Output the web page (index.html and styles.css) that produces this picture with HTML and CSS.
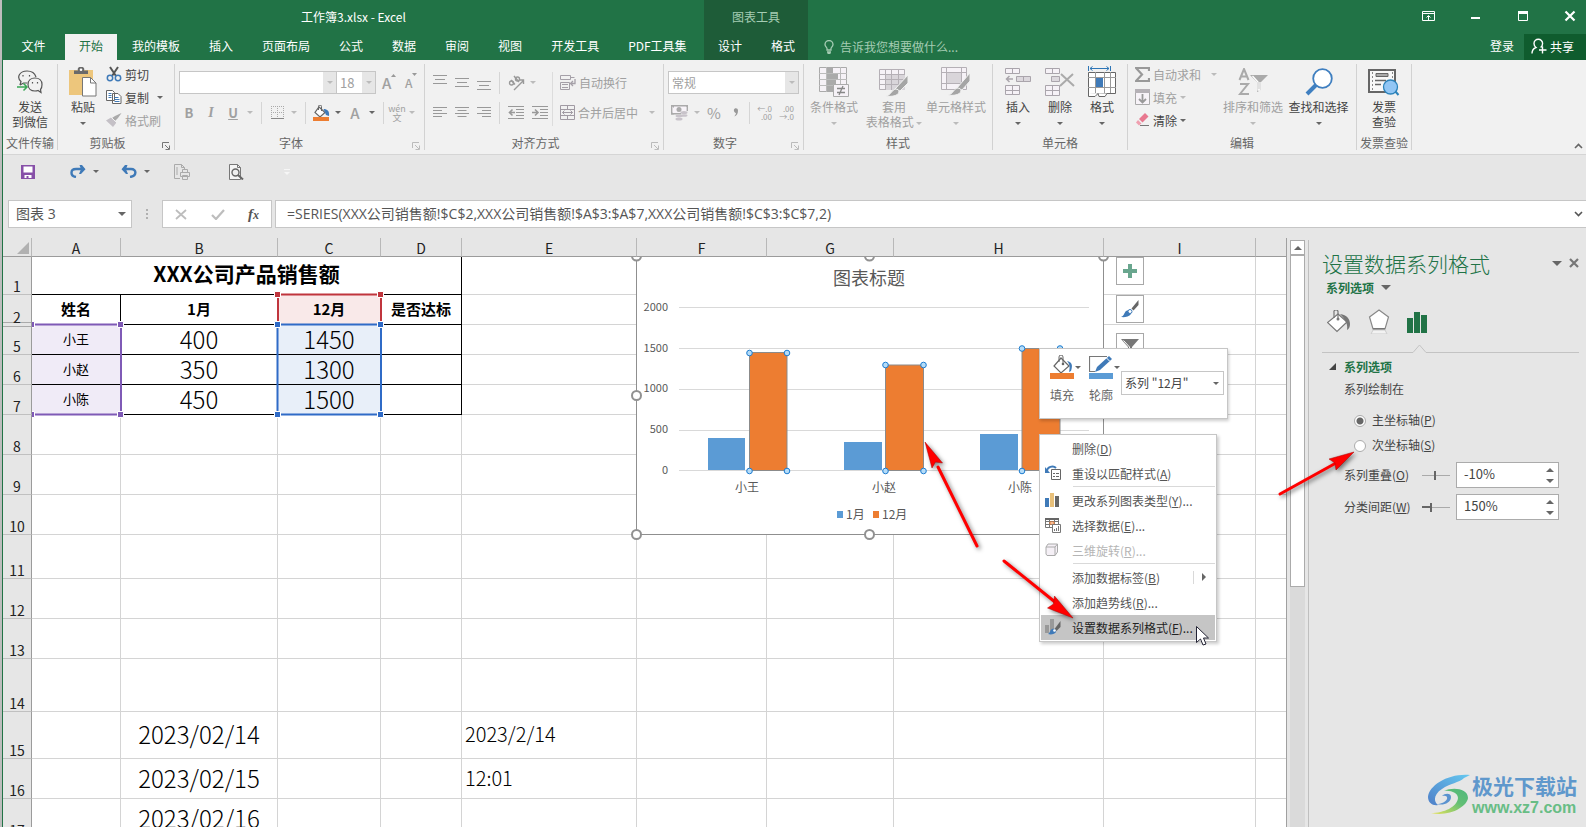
FILE: index.html
```html
<!DOCTYPE html>
<html lang="zh-CN">
<head>
<meta charset="utf-8">
<title>工作簿3.xlsx - Excel</title>
<link rel="stylesheet" href="styles.css">
</head>
<body>
<div class="app">
  <header class="titlebar">
    <div class="title-left">
      <h1 class="doc-title">工作簿3.xlsx - Excel</h1>
      <nav class="tabs">
        <button class="tab tab-file">文件</button>
        <button class="tab tab-active">开始</button>
        <button class="tab">我的模板</button>
        <button class="tab">插入</button>
        <button class="tab">页面布局</button>
        <button class="tab">公式</button>
        <button class="tab">数据</button>
        <button class="tab">审阅</button>
        <button class="tab">视图</button>
        <button class="tab">开发工具</button>
        <button class="tab">PDF工具集</button>
      </nav>
    </div>
    <div class="context-tabs">
      <span class="context-title">图表工具</span>
      <nav class="tabs">
        <button class="tab">设计</button>
        <button class="tab">格式</button>
      </nav>
    </div>
    <div class="title-right">
      <div class="window-controls">
        <button aria-label="功能区显示选项"><svg width="14" height="12" viewBox="0 0 14 12" fill="none" stroke="#fff"><path d="M.5 1.500h12v9H.5zM.5 3.500h12M6.500 10V6M4.500 7.500l2-2 2 2"/></svg></button>
        <button aria-label="最小化"><svg width="14" height="12" viewBox="0 0 14 12"><path d="M2 7h9v2H2z" fill="#fff"/></svg></button>
        <button aria-label="最大化"><svg width="14" height="12" viewBox="0 0 14 12"><path d="M2.500 1.500h9v9h-9z" fill="none" stroke="#fff"/><path d="M2 1h10v3H2z" fill="#fff"/></svg></button>
        <button aria-label="关闭"><svg width="14" height="12" viewBox="0 0 14 12"><path d="M2.500 1.500l9 9M11.500 1.500l-9 9" stroke="#fff" stroke-width="2.200"/></svg></button>
      </div>
      <div class="title-actions">
        <svg class="bulb" width="10" height="14" viewBox="0 0 10 14" fill="none" stroke="#a5ccb3" stroke-width="1.300"><path d="M3 10V8.500C3 7.500 1 6.500 1 4.500a4 4 0 0 1 8 0c0 2-2 3-2 4V10zM3 12h4M3.500 13.400h3"/></svg>
        <span class="tell-me">告诉我您想要做什么...</span>
        <button class="login">登录</button>
        <button class="share"><svg width="16" height="16" viewBox="0 0 16 16" fill="none" stroke="#fff" stroke-width="1.400"><path d="M1 15.500c0-3 1.500-5 4-6C3.500 8.500 3 7 3 5.500a4.300 4.300 0 0 1 8.600 0c0 1.500-.6 3-2 4M11.500 8.500v7M8 12h7.500"/></svg><span>共享</span></button>
      </div>
    </div>
  </header>

  <section class="ribbon">
    <div class="group g-send">
      <div class="group-body">
        <button class="big"><span class="big-icon"><svg width="26" height="24" viewBox="0 0 26 24" fill="none" stroke="#555" stroke-width="1.200"><path d="M3 15l1-3.500C-1 7 3 1 10 1c5 0 8 2.500 9 6"/><path d="M3 15l3.500-2H10"/><path d="M25 14.500c0-4-3-6.500-7-6.500s-7 2.500-7 6.500 3 6.500 7 6.500c1 0 2-.1 3-.5l3 2-.5-3c1-1 1.500-3 1.500-5z" fill="#f1f1f1"/><path d="M6 5v1.500M12.500 5v1.500M15.500 12v1.500M20.500 12v1.500"/><path d="M0 17h10M6.500 13.500L10 17l-3.500 3.500" stroke="#3aa655" stroke-width="1.500"/></svg></span><span>发送</span><span>到微信</span></button>
      </div>
      <div class="group-label">文件传输</div>
    </div>

    <div class="group g-clip">
      <div class="group-body">
        <button class="big paste"><span class="big-icon"><svg width="30" height="30" viewBox="0 0 30 30"><path d="M1 3h24v25H1z" fill="#edc67c"/><path d="M6 7V3.500h4A2.500 2.500 0 0 1 13 0a2.500 2.500 0 0 1 3 3.500h4V7z" fill="#6a6a6a"/><circle cx="13" cy="2.800" r="1.300" fill="#fff"/><path d="M14.500 10.500h8l5.500 5.500v13H14.500z" fill="#fff" stroke="#777"/><path d="M22.500 10.500V16H28" fill="none" stroke="#777"/></svg></span><span>粘贴</span><span><i class="caret"></i></span></button>
        <div class="stack">
          <button class="small"><svg width="16" height="16" viewBox="0 0 16 16" fill="none"><path d="M4 1l6 9M12 1L6 10" stroke="#555" stroke-width="2"/><circle cx="4" cy="12" r="2.700" stroke="#3f7ab8" stroke-width="1.500"/><circle cx="12" cy="12" r="2.700" stroke="#3f7ab8" stroke-width="1.500"/></svg><span>剪切</span></button>
          <button class="small"><svg width="16" height="14" viewBox="0 0 16 14" fill="#fff" stroke="#666"><path d="M.5.500h6l2 2v8h-8zM6.500 3.500h5.500l3 3v7H6.500z"/><path d="M2.500 3.500h3M2.500 5.500h3M2.500 7.500h3M8.500 7.500h4M8.500 9.500h5M8.500 11.500h5" stroke="#3f7ab8"/></svg><span>复制</span><i class="caret copy-caret"></i></button>
          <button class="small off"><svg width="16" height="14" viewBox="0 0 16 14"><path d="M15.500 0L12 5l-3 3-3-3 3-2z" fill="#aaa"/><path d="M5 4.500l5.500 5L7 14 0 7.500z" fill="#c4c0c6"/><path d="M5 4l6 6" stroke="#f1f1f1"/></svg><span>格式刷</span></button>
        </div>
      </div>
      <div class="group-label has-launcher">剪贴板<svg class="launcher" width="8" height="8" viewBox="0 0 8 8" fill="none" stroke="#777"><path d="M.5 6V.500H7M3 3l4 4M7.500 3.500v4h-4"/></svg></div>
    </div>

    <div class="group g-font off">
      <div class="group-body rows">
        <div class="row">
          <span class="combo font-name"><select aria-label="字体"><option></option></select><i class="drop"></i></span><span class="combo font-size"><select aria-label="字号"><option>18</option></select><i class="drop"></i></span>
          <button class="grow-font" aria-label="增大字号"><b class="ga">A</b><svg width="5" height="3" viewBox="0 0 5 3"><path d="M0 3L2.500 0 5 3z" fill="#999"/></svg></button>
          <button class="grow-font" aria-label="减小字号"><b class="gs">A</b><svg width="5" height="3" viewBox="0 0 5 3"><path d="M0 0h5L2.500 3z" fill="#999"/></svg></button>
        </div>
        <div class="row format-row">
          <button class="fmt"><b>B</b></button><button class="fmt"><em>I</em></button><button class="fmt"><u>U</u></button><i class="caret slot"></i><i class="sep"></i>
          <button class="fmt" aria-label="边框"><svg width="13" height="13" viewBox="0 0 13 13" fill="none" stroke="#aaa"><path d="M0 .5h13M0 6.500h13M.5 0v12M6.500 0v12M12.500 0v12" stroke-dasharray="1 1"/><path d="M0 12.500h13" stroke="#888"/></svg></button><i class="caret slot"></i><i class="sep"></i>
          <button class="fmt" aria-label="填充颜色"><svg width="17" height="16" viewBox="0 0 17 16"><path d="M6 2l6 5.500-5 4.500-5-4.500z" fill="#fff" stroke="#666" stroke-width="1.200"/><path d="M5.500 5V1.500a1.500 1.500 0 0 1 3 0V6" fill="none" stroke="#666"/><path d="M10.500 4c4 0 6 2 5.500 7l-3-1z" fill="#3f7ab8"/><path d="M0 12h16v4H0z" fill="#ed7d31"/></svg></button><i class="caret slot dark"></i>
          <button class="fmt letter"><span>A</span></button><i class="caret slot dark"></i><i class="sep"></i>
          <button class="fmt pinyin"><span>wén</span><span>文</span></button><i class="caret slot"></i>
        </div>
      </div>
      <div class="group-label has-launcher">字体<svg class="launcher" width="8" height="8" viewBox="0 0 8 8" fill="none" stroke="#bbb"><path d="M.5 6V.500H7M3 3l4 4M7.500 3.500v4h-4"/></svg></div>
    </div>

    <div class="group g-align off">
      <div class="group-body">
        <div class="align-left rows">
          <div class="row icons">
            <svg width="14" height="15" viewBox="0 0 14 15" stroke="#999"><path d="M0 .5h14M2 4.500h10M0 8.500h14"/></svg>
            <svg width="14" height="15" viewBox="0 0 14 15" stroke="#999"><path d="M0 3.500h14M2 7.500h10M0 11.500h14"/></svg>
            <svg width="14" height="15" viewBox="0 0 14 15" stroke="#999"><path d="M0 6.500h14M2 10.500h10M0 14.500h14"/></svg>
            <i class="bar"></i>
            <svg width="17" height="16" viewBox="0 0 17 16" fill="none" stroke="#999" stroke-width="1.400"><path d="M6 15L15.500 5.500M11.500 5h4v4"/><circle cx="3.500" cy="8" r="2"/><path d="M3 5l4 4.500M6 1l5 6"/><circle cx="9.500" cy="4" r="2"/></svg><i class="caret"></i>
          </div>
          <div class="row icons">
            <svg width="14" height="11" viewBox="0 0 14 11" stroke="#999"><path d="M0 .5h14M0 3.500h9M0 6.500h14M0 9.500h9"/></svg>
            <svg width="14" height="11" viewBox="0 0 14 11" stroke="#999"><path d="M0 .5h14M2.500 3.500h9M0 6.500h14M2.500 9.500h9"/></svg>
            <svg width="14" height="11" viewBox="0 0 14 11" stroke="#999"><path d="M0 .5h14M5 3.500h9M0 6.500h14M5 9.500h9"/></svg>
            <i class="bar"></i>
            <svg width="16" height="13" viewBox="0 0 16 13" stroke="#999"><path d="M0 .5h16M8 3.500h8M8 6.500h8M8 9.500h8M0 12.500h16"/><path d="M2 6.500h5M4.500 3.500l-3 3 3 3" fill="none" stroke-width="1.600"/></svg>
            <svg width="16" height="13" viewBox="0 0 16 13" stroke="#999"><path d="M0 .5h16M8 3.500h8M8 6.500h8M8 9.500h8M0 12.500h16"/><path d="M0 6.500h5M3 3.500l3 3-3 3" fill="none" stroke-width="1.600"/></svg>
          </div>
        </div>
        <div class="align-right rows">
          <button class="row wide"><svg width="16" height="16" viewBox="0 0 16 16" fill="none" stroke="#a5a0a8"><path d="M.5.500h10v4H.5zM.5 7.500h9v7h-9zM10.500 2.500h4M2 9.500h6M2 12.500h6"/><path d="M15 4v4.500h-4M13 6l-2.500 2.500L13 11" stroke-width="1.300"/></svg><span>自动换行</span></button>
          <button class="row wide"><svg width="15" height="15" viewBox="0 0 15 15" fill="none" stroke="#a09aa3"><path d="M.5.500h14v14H.5zM.5 4.500h14M.5 10.500h14M7.500.500v4M7.500 10.500v4M2.500 7.500h10M4.500 5.500l-2 2 2 2M10.500 5.500l2 2-2 2"/></svg><span>合并后居中</span><i class="caret merge-caret"></i></button>
        </div>
      </div>
      <div class="group-label has-launcher">对齐方式<svg class="launcher" width="8" height="8" viewBox="0 0 8 8" fill="none" stroke="#bbb"><path d="M.5 6V.500H7M3 3l4 4M7.500 3.500v4h-4"/></svg></div>
    </div>

    <div class="group g-num off">
      <div class="group-body rows">
        <div class="row"><span class="combo num-format"><select aria-label="数字格式"><option>常规</option></select><i class="drop"></i></span></div>
        <div class="row number-row">
          <svg width="17" height="16" viewBox="0 0 17 16"><path d="M.7.700h15.600v8H.7z" fill="#f7f3f8" stroke="#aaa" stroke-width="1.400"/><path d="M0 0h3v3zM17 0v3l-3-3zM0 9.500V6l3 3.500z" fill="#aaa"/><circle cx="8" cy="4.500" r="2.500" fill="#aaa"/><path d="M10 6h7v8h-7z" fill="#f1f1f1"/><g fill="#c8c3ca"><ellipse cx="13" cy="7.500" rx="3.500" ry="1.500"/><ellipse cx="13" cy="10.500" rx="3.500" ry="1.300"/><ellipse cx="8" cy="11" rx="3.500" ry="1.300"/><ellipse cx="8" cy="14" rx="3.500" ry="1.500"/></g></svg><i class="caret"></i>
          <button class="percent">%</button><button class="comma" aria-label="千位分隔样式"><svg width="6" height="9" viewBox="0 0 6 9"><path d="M1 1.500C2-.5 5 0 5 2.500 5 5.500 4 7.500 1.500 8.500c0-1 1.500-2 1.500-3.500C1.500 5 .5 3 1 1.500z" fill="#999"/></svg></button><i class="bar"></i>
          <button class="decimals"><span>←.0</span><span>.00</span></button>
          <button class="decimals"><span>.00</span><span>→.0</span></button>
        </div>
      </div>
      <div class="group-label has-launcher">数字<svg class="launcher" width="8" height="8" viewBox="0 0 8 8" fill="none" stroke="#bbb"><path d="M.5 6V.500H7M3 3l4 4M7.500 3.500v4h-4"/></svg></div>
    </div>

    <div class="group g-style off">
      <div class="group-body">
        <button class="big"><span class="big-icon"><svg width="30" height="30" viewBox="0 0 30 30"><path d="M.5.500h27v24H.5z" fill="#f6f2f7" stroke="#aaa"/><path d="M0 6.500h28M0 12.500h28M0 18.500h28M7.500 0v25M21.500 0v25" stroke="#bbb"/><path d="M8 1h6v5H8zM8 7h11v5H8zM8 13h9v5H8zM8 19h6v5H8z" fill="#aaa"/><path d="M14.500 17.500h15v12h-15z" fill="#f6f2f7" stroke="#aaa"/><path d="M18 21.500h8M18 25.500h8M24 19l-4 9" stroke="#888" stroke-width="1.300"/></svg></span><span>条件格式</span><span><i class="caret"></i></span></button>
        <button class="big"><span class="big-icon"><svg width="30" height="30" viewBox="0 0 30 30"><path d="M.5 2.500h25v20H.5z" fill="#f6f2f7" stroke="#b5b0b6"/><path d="M6 8h20v15H6z" fill="#d9d5da"/><path d="M0 7.500h26M0 12.500h26M0 17.500h26M6.500 2v21M12.500 2v21M19.500 2v21" stroke="#b5b0b6"/><path d="M29 8v8l-8 8-5-2z" fill="#a5a5a5" stroke="#f1f1f1"/><path d="M16 22c3 0 4 1 4 3-1 4-8 5-13 4 5-1 5-5 9-7z" fill="#a5a5a5" stroke="#f1f1f1"/></svg></span><span>套用</span><span>表格格式 <i class="caret inline"></i></span></button>
        <button class="big"><span class="big-icon"><svg width="30" height="30" viewBox="0 0 30 30"><path d="M.5.500h25v22H.5z" fill="#f6f2f7" stroke="#b5b0b6"/><path d="M6 6h14v10H6z" fill="#d9d5da"/><path d="M0 5.500h26M0 16.500h26M5.500 0v22M20.500 0v22" stroke="#b5b0b6"/><path d="M29 6v8l-8 9-5-2z" fill="#a5a5a5" stroke="#f1f1f1"/><path d="M16 21c3 0 4 1 4 3-1 4-8 5-13 4 5-1 5-5 9-7z" fill="#a5a5a5" stroke="#f1f1f1"/></svg></span><span>单元格样式</span><span><i class="caret"></i></span></button>
      </div>
      <div class="group-label">样式</div>
    </div>

    <div class="group g-cells">
      <div class="group-body">
        <button class="big"><span class="big-icon"><svg width="28" height="28" viewBox="0 0 28 28" fill="#f6f2f7" stroke="#aaa5ac"><path d="M1.500.500h14v5h-14zM8.500.500v5M1.500 17.500h14v9h-14zM8.500 17.500v9M1.500 22.500h14"/><path d="M12.500 8.500h14v5h-14zM19.500 8.500v5" fill="#dcd8dd"/><path d="M9 11H3M5.500 8L2.500 11l3 3" fill="none" stroke-width="1.500"/></svg></span><span>插入</span><span><i class="caret"></i></span></button>
        <button class="big"><span class="big-icon"><svg width="30" height="28" viewBox="0 0 30 28" fill="#f6f2f7" stroke="#aaa5ac"><path d="M.5.500h14v5H.5zM7.500.500v5M.5 17.500h14v10H.5zM7.500 17.500v10M.5 22.500h14"/><path d="M6.500 8.500h8v5h-8z" fill="#dcd8dd"/><path d="M16 6l13 12M28 6L15 18" stroke="#aaa" stroke-width="2"/></svg></span><span>删除</span><span><i class="caret"></i></span></button>
        <button class="big"><span class="big-icon"><svg width="28" height="31" viewBox="0 0 28 31"><path d="M.5 0v5M22.500 0v5M2 2.500h19M4.500.500l-2.500 2 2.500 2M18.500.500l2.500 2-2.500 2" fill="none" stroke="#2e75b6"/><path d="M.5 6.500h27v21H.5z" fill="#fff" stroke="#666"/><path d="M0 11.500h28M0 21.500h28M7.500 6v21M16.500 6v21M22.500 6v21" stroke="#999"/><path d="M8 12h7v9H8z" fill="#3f7ab8"/><path d="M.5 27v3.500H7l3-3 1 3h6l2-3" fill="#fff" stroke="#666"/></svg></span><span>格式</span><span><i class="caret"></i></span></button>
      </div>
      <div class="group-label">单元格</div>
    </div>

    <div class="group g-edit">
      <div class="group-body">
        <div class="stack">
          <button class="small off"><svg width="15" height="15" viewBox="0 0 15 15"><path d="M14 4V1H1l6 6.500L1 14h13v-3" fill="none" stroke="#999" stroke-width="2.200"/></svg><span>自动求和</span><i class="caret sum-caret"></i></button>
          <button class="small off"><svg width="15" height="16" viewBox="0 0 15 16"><path d="M.5.500h14v15H.5z" fill="#f7f3f8" stroke="#aaa"/><path d="M0 0h15v4H0z" fill="#b5b1b6"/><path d="M7.500 5v8M4 10l3.500 3.500L11 10" fill="none" stroke="#999" stroke-width="1.800"/></svg><span>填充</span><i class="caret"></i></button>
          <button class="small"><svg width="15" height="14" viewBox="0 0 15 14"><path d="M10 0l3.500 3.500-6 6L4 6z" fill="#e8788f"/><path d="M3 7l3.500 3.500L4 12.500 1 9.500z" fill="#f0a0b0"/><path d="M5 12.500h9" stroke="#777"/></svg><span>清除</span><i class="caret"></i></button>
        </div>
        <button class="big off sort"><span class="big-icon"><svg width="30" height="28" viewBox="0 0 30 28" fill="none" stroke="#aaa" stroke-width="2"><path d="M1.500 12L6 1l4.500 11M3 8.500h6M2 16h8L2 26h9"/><path d="M12 7h18l-7 7v8l-4 2V14z" fill="#aaa" stroke="none"/><path d="M14.500 8l5.500 6v8h2v-8" stroke="#fff" stroke-width="1.300"/></svg></span><span>排序和筛选</span><span><i class="caret"></i></span></button>
        <button class="big"><span class="big-icon"><svg width="28" height="28" viewBox="0 0 28 28"><circle cx="17.500" cy="10.500" r="9.300" fill="#fff" stroke="#3f7fc0" stroke-width="1.800"/><path d="M11 17l-9 9" stroke="#3f7fc0" stroke-width="4"/></svg></span><span>查找和选择</span><span><i class="caret"></i></span></button>
      </div>
      <div class="group-label">编辑</div>
    </div>

    <div class="group g-invoice">
      <div class="group-body">
        <button class="big"><span class="big-icon"><svg width="32" height="28" viewBox="0 0 32 28"><path d="M1 2h26v22H1z" fill="#f8f8f8" stroke="#666" stroke-width="2"/><path d="M4.500 4v18M24.500 4v10" stroke="#888" stroke-dasharray="2 2"/><path d="M8 5.500h12v3H8z" fill="#aaa" stroke="#666"/><path d="M7 12.500h11M7 16.500h6" stroke="#666" stroke-width="1.400"/><path d="M27 23l3.500 4" stroke="#2d83ba" stroke-width="2"/><circle cx="22.500" cy="19" r="7" fill="#92c6f4" stroke="#2d83ba" stroke-width="1.300"/></svg></span><span>发票</span><span>查验</span></button>
      </div>
      <div class="group-label">发票查验</div>
    </div>
    <button class="collapse" aria-label="折叠功能区"><svg width="9" height="6" viewBox="0 0 9 6"><path d="M1 5l3.500-3.500L8 5" fill="none" stroke="#666" stroke-width="1.600"/></svg></button>
  </section>

  <div class="quick-bar">
    <button aria-label="保存"><svg width="14" height="14" viewBox="0 0 14 14"><path d="M0 0h14v14H0z" fill="#8750a8"/><path d="M2.500 1.500h9v6h-9zM3.500 10h7v3h-3v-2h-2v2h-2z" fill="#fff"/></svg></button>
    <button class="redo" aria-label="恢复"><svg width="16" height="13" viewBox="0 0 16 13"><path d="M6 12C0 11 0 4 6 4h5" fill="none" stroke="#3f7ab8" stroke-width="2.400"/><path d="M9.500 0h2.500l3.500 4.300L11 9H9l2-4.700z" fill="#3f7ab8"/></svg></button><i class="caret dark"></i>
    <button class="undo" aria-label="撤消"><svg width="16" height="13" viewBox="0 0 16 13"><path d="M9 12c7-1 7-8 1-8H5" fill="none" stroke="#3f7ab8" stroke-width="2.400"/><path d="M6.500 0H4L.5 4.300 5 9h2L5 4.300z" fill="#3f7ab8"/></svg></button><i class="caret dark"></i>
    <button class="quick-print" aria-label="快速打印"><svg width="17" height="16" viewBox="0 0 17 16" fill="none" stroke="#aaa"><path d="M6 14.500H.500V.500h7l3 3V5M7.500.500v3h3M3 3v8M6.500 12.500v-4h9v4zM8.500 8.500v-3h5v3M8.500 11.500h5v4h-5z"/></svg></button>
    <button class="preview" aria-label="打印预览"><svg width="15" height="16" viewBox="0 0 15 16"><path d="M.5.500h8l3 3v12H.5z" fill="#f5f5f5" stroke="#777"/><path d="M8.500.500v3h3" fill="none" stroke="#777"/><circle cx="6.500" cy="8.500" r="3.500" fill="#eee" stroke="#666" stroke-width="1.400"/><path d="M9 11l5 4.500" stroke="#666" stroke-width="2"/></svg></button>
    <svg class="more" width="6" height="6" viewBox="0 0 6 6"><path d="M0 .5h6" stroke="#f6f6f6"/><path d="M0 3h6L3 6z" fill="#f6f6f6"/></svg>
  </div>

  <div class="formula-row">
    <span class="name-box"><input aria-label="名称框" value="图表 3"><i class="caret large"></i></span>
    <svg class="grip" width="3" height="11" viewBox="0 0 3 11"><path d="M0 0h2v2H0zM0 4h2v2H0zM0 8h2v2H0z" fill="#b0b0b0"/></svg>
    <div class="fx-box">
      <svg width="12" height="11" viewBox="0 0 12 11"><path d="M1 1l10 9M11 1L1 10" stroke="#bdbdbd" stroke-width="1.800"/></svg>
      <svg width="14" height="11" viewBox="0 0 14 11"><path d="M1 6l4 4 8-9" fill="none" stroke="#bdbdbd" stroke-width="2.200"/></svg>
      <span class="fx">f<small>x</small></span>
    </div>
    <span class="formula-box"><input aria-label="编辑栏" value="=SERIES(XXX公司销售额!$C$2,XXX公司销售额!$A$3:$A$7,XXX公司销售额!$C$3:$C$7,2)"><svg width="9" height="6" viewBox="0 0 9 6"><path d="M1 1l3.500 3.500L8 1" fill="none" stroke="#555" stroke-width="1.600"/></svg></span>
  </div>

  <main class="workspace">
    <section class="sheet">
      <table class="cells">
        <colgroup><col class="c-head"><col class="c-a"><col class="c-b"><col class="c-c"><col class="c-d"><col class="c-e"><col class="c-f"><col class="c-g"><col class="c-h"><col class="c-i"><col></colgroup>
        <thead><tr><th class="corner"><svg width="12" height="12" viewBox="0 0 12 12"><path d="M12 0v12H0z" fill="#b1b1b1"/></svg></th><th>A</th><th>B</th><th>C</th><th>D</th><th>E</th><th>F</th><th>G</th><th>H</th><th>I</th><th></th></tr></thead>
        <tbody>
          <tr class="h38"><th>1</th><td colspan="4" class="k heading">XXX公司产品销售额</td><td></td><td></td><td></td><td></td><td></td><td></td></tr>
          <tr class="h30 labels"><th class="before-hidden">2</th><td class="k">姓名</td><td class="k">1月</td><td class="k red">12月</td><td class="k">是否达标</td><td></td><td></td><td></td><td></td><td></td><td></td></tr>
          <tr class="h30"><th class="after-hidden">5</th><td class="k name">小王</td><td class="k num">400</td><td class="k num blue">1450</td><td class="k"></td><td></td><td></td><td></td><td></td><td></td><td></td></tr>
          <tr class="h30"><th>6</th><td class="k name">小赵</td><td class="k num">350</td><td class="k num blue">1300</td><td class="k"></td><td></td><td></td><td></td><td></td><td></td><td></td></tr>
          <tr class="h30"><th>7</th><td class="k name">小陈</td><td class="k num">450</td><td class="k num blue">1500</td><td class="k"></td><td></td><td></td><td></td><td></td><td></td><td></td></tr>
          <tr class="h40"><th>8</th><td></td><td></td><td></td><td></td><td></td><td></td><td></td><td></td><td></td><td></td></tr>
          <tr class="h40"><th>9</th><td></td><td></td><td></td><td></td><td></td><td></td><td></td><td></td><td></td><td></td></tr>
          <tr class="h40"><th>10</th><td></td><td></td><td></td><td></td><td></td><td></td><td></td><td></td><td></td><td></td></tr>
          <tr class="h44"><th>11</th><td></td><td></td><td></td><td></td><td></td><td></td><td></td><td></td><td></td><td></td></tr>
          <tr class="h40"><th>12</th><td></td><td></td><td></td><td></td><td></td><td></td><td></td><td></td><td></td><td></td></tr>
          <tr class="h40"><th>13</th><td></td><td></td><td></td><td></td><td></td><td></td><td></td><td></td><td></td><td></td></tr>
          <tr class="h53"><th>14</th><td></td><td></td><td></td><td></td><td></td><td></td><td></td><td></td><td></td><td></td></tr>
          <tr class="h47"><th>15</th><td></td><td class="num">2023/02/14</td><td></td><td></td><td class="date">2023/2/14</td><td></td><td></td><td></td><td></td><td></td></tr>
          <tr class="h40"><th>16</th><td></td><td class="num">2023/02/15</td><td></td><td></td><td class="date">12:01</td><td></td><td></td><td></td><td></td><td></td></tr>
          <tr class="h40"><th>17</th><td></td><td class="num">2023/02/16</td><td></td><td></td><td></td><td></td><td></td><td></td><td></td><td></td></tr>
        </tbody>
      </table>

      <div class="drawing-layer">
        <svg class="ranges" width="440" height="170" viewBox="32 257 440 170" fill="none">
          <path d="M30 324.500H121V414.500H30" stroke="#7f5ab6" stroke-width="2"/>
          <path d="M278 324V294.500H381V324" stroke="#c0353d" stroke-width="2"/>
          <path d="M277.500 324.500H381V414.500H277.500z" stroke="#2f6bc7" stroke-width="2"/>
          <g stroke="#fff">
            <path d="M29.500 321.500h5v6h-5zM117.500 321.500h6v6h-6zM29.500 411.500h5v6h-5zM117.500 411.500h6v6h-6z" fill="#7f5ab6"/>
            <path d="M274.500 291.500h6v6h-6zM377.500 291.500h6v6h-6z" fill="#c0353d"/>
            <path d="M274.500 321.500h6v6h-6zM377.500 321.500h6v6h-6zM274.500 411.500h6v6h-6zM377.500 411.500h6v6h-6z" fill="#2f6bc7"/>
          </g>
        </svg>
        <svg class="chart" width="490" height="290" viewBox="626 257 490 290">
          <path d="M636.500 250H1103.500V534.500H636.500z" fill="#fff" stroke="#8f8f8f"/>
          <text class="chart-title" x="869" y="285" text-anchor="middle">图表标题</text>
          <path d="M679 307.500h410M679 348.500h410M679 389.500h410M679 430.500h410M679 470.500h410" stroke="#d9d9d9"/>
          <g class="axis" text-anchor="end"><text x="668" y="311">2000</text><text x="668" y="352">1500</text><text x="668" y="392">1000</text><text x="668" y="433">500</text><text x="668" y="474">0</text></g>
          <path d="M708 438h37v32h-37zM844 442h38v28h-38zM980 434h38v36h-38z" fill="#5b9bd5"/>
          <path d="M749.500 352.500h37.500v118h-37.500zM885.500 365h38v105.500h-38zM1022 348.500h38v122h-38z" fill="#ed7d31" stroke="#8b8b8b"/>
          <g class="dots" fill="#b5dcf8" stroke="#1c7cd0"><circle cx="749.500" cy="353" r="2.800"/><circle cx="787" cy="353" r="2.800"/><circle cx="749.500" cy="471" r="2.800"/><circle cx="787" cy="471" r="2.800"/><circle cx="885.500" cy="365" r="2.800"/><circle cx="923.500" cy="365" r="2.800"/><circle cx="885.500" cy="471" r="2.800"/><circle cx="923.500" cy="471" r="2.800"/><circle cx="1022" cy="348.500" r="2.800"/><circle cx="1060" cy="348.500" r="2.800"/><circle cx="1022" cy="471" r="2.800"/></g>
          <g class="category" text-anchor="middle"><text x="747" y="492">小王</text><text x="884" y="492">小赵</text><text x="1020" y="492">小陈</text></g>
          <path d="M837 511h6v7h-6z" fill="#5b9bd5"/><path d="M873 511h6v7h-6z" fill="#ed7d31"/>
          <g class="category"><text x="846" y="519">1月</text><text x="882" y="519">12月</text></g>
          <g fill="#fff" stroke="#919191" stroke-width="2"><circle cx="636.500" cy="256" r="4.500"/><circle cx="869.500" cy="256" r="4.500"/><circle cx="1103.500" cy="256" r="4.500"/><circle cx="636.500" cy="395.500" r="4.500"/><circle cx="636.500" cy="534.500" r="4.500"/><circle cx="869.500" cy="534.500" r="4.500"/></g>
        </svg>
        <div class="chart-buttons">
          <button aria-label="图表元素"><svg width="14" height="14" viewBox="0 0 14 14"><path d="M5 0h4v5h5v4H9v5H5V9H0V5h5z" fill="#69a68e"/></svg></button>
          <button aria-label="图表样式"><svg width="18" height="18" viewBox="0 0 18 18"><path d="M17.500 0v5l-5 5.500-2-2z" fill="#666"/><path d="M0 17c3-1 3-4 5-6 3-2 6 0 5 3-2 3-7 3.500-10 3z" fill="#3f7ab8"/><circle cx="9" cy="11.500" r="2" fill="#fff" stroke="#3f7ab8"/></svg></button>
          <button aria-label="图表筛选器"><svg width="18" height="16" viewBox="0 0 18 16"><path d="M0 0h18l-7 8v7H7V8z" fill="#777"/><path d="M2.500 1.500L8.500 8v5" fill="none" stroke="#fff"/></svg></button>
        </div>
      </div>
    </section>

    <div class="scrollbar"><button aria-label="向上滚动"><i class="tri-up"></i></button><div class="track"><div class="thumb"></div></div></div>

    <aside class="pane">
      <div class="pane-head"><h2>设置数据系列格式</h2><i class="caret wide-caret"></i><button aria-label="关闭窗格"><svg width="10" height="10" viewBox="0 0 10 10"><path d="M1 1l8 8M9 1L1 9" stroke="#777" stroke-width="2.200"/></svg></button></div>
      <div class="pane-sub">系列选项<i class="caret wide-caret"></i></div>
      <div class="pane-icons">
        <svg width="24" height="23" viewBox="0 0 24 23"><path d="M11 4l9 8-10 9.500-9.500-9z" fill="#fff" stroke="#777" stroke-width="1.200"/><path d="M7 8V2.500a2 2 0 0 1 4-1V9" fill="none" stroke="#777" stroke-width="1.200"/><circle cx="11" cy="9" r="1.500" fill="#777"/><path d="M13 4c7 1 10 5 10 10 0 3-1 5-3 6 1-5-1-10-7-16z" fill="#777"/></svg>
        <svg width="22" height="25" viewBox="0 0 22 25"><path d="M11 1l9.500 7L17 20H5L1.500 8z" fill="#fff" stroke="#888" stroke-width="1.200"/><path d="M5 20h12" stroke="#777" stroke-width="2"/><path d="M5 21l-2 4h16l-2-4z" fill="#f2f2f2" stroke="#ccc"/></svg>
        <svg width="20" height="22" viewBox="0 0 20 22"><path d="M0 7h6v15H0zM7 1h6v21H7zM14 4h6v18h-6z" fill="#217346"/></svg>
      </div>
      <div class="pane-divider"><i></i><svg width="13" height="9" viewBox="0 0 13 9"><path d="M0 8.500L6.500 1 13 8.500" fill="none" stroke="#c3c3c3"/></svg><i class="rest"></i></div>
      <div class="pane-section"><svg width="7" height="7" viewBox="0 0 7 7"><path d="M7 0v7H0z" fill="#444"/></svg>系列选项</div>
      <fieldset class="plot-on"><legend>系列绘制在</legend>
        <label><input type="radio" name="axis" checked><span>主坐标轴(<u>P</u>)</span></label>
        <label><input type="radio" name="axis"><span>次坐标轴(<u>S</u>)</span></label>
      </fieldset>
      <div class="field"><label for="overlap">系列重叠(<u>O</u>)</label><input class="slider" type="range" min="-100" max="100" value="-10" aria-label="系列重叠"><span class="spin"><input id="overlap" value="-10%"><span><i class="tri-up"></i><i class="caret large"></i></span></span></div>
      <div class="field"><label for="gap">分类间距(<u>W</u>)</label><input class="slider filled" type="range" min="0" max="500" value="150" aria-label="分类间距"><span class="spin"><input id="gap" value="150%"><span><i class="tri-up"></i><i class="caret large"></i></span></span></div>
    </aside>
  </main>

  <div class="mini-toolbar">
    <button class="mini-btn"><svg width="24" height="25" viewBox="0 0 24 25"><path d="M11 3l8 8-8 7-7-7z" fill="#fff" stroke="#666" stroke-width="1.200"/><path d="M9 7V2a2 2 0 0 1 4 0v6" fill="none" stroke="#666"/><circle cx="13" cy="9" r="1.300" fill="#666"/><path d="M17 6c5 1 6 4 4 10l-2 1c1-4 1-8-2-11z" fill="#3f7ab8"/><path d="M0 18h24v6H0z" fill="#ed7d31"/></svg><span>填充</span></button><i class="caret dark"></i>
    <button class="mini-btn"><svg width="24" height="25" viewBox="0 0 24 25"><path d="M18 1.500H.500v15H6" fill="none" stroke="#777" stroke-width="1.200"/><path d="M20 1l3 3L11 15l-5 2 2-5z" fill="#3f7ab8"/><path d="M17.500 3l3 3" stroke="#fff"/><path d="M0 18h24v6H0z" fill="#5b9bd5"/></svg><span>轮廓</span></button><i class="caret dark"></i>
    <span class="combo series"><select aria-label="图表元素"><option>系列 "12月"</option></select><i class="caret dark"></i></span>
  </div>

  <div class="context-menu">
    <button><span class="mi"></span><span>删除(<u>D</u>)</span></button>
    <button><span class="mi"><svg width="17" height="16" viewBox="0 0 17 16" fill="none"><path d="M6.500 4.500h9v10h-9z" fill="#fff" stroke="#666"/><path d="M8 8.500h2M11 8.500h3M8 11.500h2M11 11.500h3" stroke="#666"/><path d="M2 6C2 2 8 0 11 3" stroke="#3f7ab8" stroke-width="2"/><path d="M0 2v6h5z" fill="#3f7ab8"/></svg></span><span>重设以匹配样式(<u>A</u>)</span></button>
    <hr>
    <button><span class="mi"><svg width="15" height="14" viewBox="0 0 15 14"><path d="M0 5h4v9H0z" fill="#3f7ab8"/><path d="M5 0h4v14H5z" fill="#e8c07a"/><path d="M10 3h4v11h-4z" fill="#666"/></svg></span><span>更改系列图表类型(<u>Y</u>)...</span></button>
    <button><span class="mi"><svg width="17" height="16" viewBox="0 0 17 16" fill="none" stroke="#777"><path d="M.5 1.500h13v9H.5zM.5 4.500h13M.5 7.500h13M4.500 1.500v9M9.500 1.500v9" fill="#fff"/><path d="M0 1h14v2H0z" fill="#666" stroke="none"/><path d="M5 5h4v2H5z" stroke="#ed7d31"/><path d="M7.500 7.500h8v8h-8z" fill="#fff"/><path d="M9.500 14v-2M11.500 14v-3M13.500 14v-5"/></svg></span><span>选择数据(<u>E</u>)...</span></button>
    <button class="disabled"><span class="mi"><svg width="14" height="14" viewBox="0 0 14 14" fill="#f5f0f6" stroke="#aaa" stroke-linejoin="round"><path d="M1 4l2-3h9.500v8L10 12.500H2L1 11z"/><path d="M1 4h9v8.500M10 4l2.500-3" fill="none"/></svg></span><span>三维旋转(<u>R</u>)...</span></button>
    <hr>
    <button><span class="mi"></span><span>添加数据标签(<u>B</u>)</span><span class="submenu"><i class="tri-right"></i></span></button>
    <button><span class="mi"></span><span>添加趋势线(<u>R</u>)...</span></button>
    <button class="selected"><span class="mi"><svg width="16" height="16" viewBox="0 0 16 16"><path d="M0 6h4v8H0zM5 0h4v12H5z" fill="#999"/><path d="M15.500 2v6l-4 4-2-2z" fill="#666"/><path d="M3 15c2-1 2-4 4-5s5 1 4 3c-1 2-5 3-8 2z" fill="#3f7ab8"/><circle cx="9.500" cy="11.500" r="1.300" fill="#fff"/></svg></span><span>设置数据系列格式(<u>F</u>)...</span></button>
  </div>

  <svg class="pointers" width="460" height="240" viewBox="900 430 460 240">
    <g class="arrows"><path d="M977 546L938 467" stroke="#f00" stroke-width="3" stroke-linecap="round"/><path d="M925 442l17.500 21-7-1-3.500 6z" fill="#f00" stroke="#a00" stroke-width=".5"/>
    <path d="M1004 561L1055 602" stroke="#f00" stroke-width="3" stroke-linecap="round"/><path d="M1073 618l-25.500-10 6-4 1-8z" fill="#f00" stroke="#a00" stroke-width=".5"/>
    <path d="M1280 494L1336 463" stroke="#f00" stroke-width="3" stroke-linecap="round"/><path d="M1354 452l-18 18-1-7-6-4z" fill="#f00" stroke="#a00" stroke-width=".5"/></g>
    <path d="M1196.500 626.500v16l4-3.500 2.500 6 3-1-2.500-6h5z" fill="#fff" stroke="#223"/>
  </svg>

  <div class="watermark">
    <svg width="44" height="42" viewBox="0 0 44 42"><defs><linearGradient id="wb" x1="0" y1="1" x2="1" y2="0"><stop offset="0" stop-color="#4f7fc8"/><stop offset="1" stop-color="#65c8f0"/></linearGradient><linearGradient id="wg" x1="0" y1="1" x2="1" y2="0"><stop offset="0" stop-color="#e8e35c"/><stop offset=".6" stop-color="#62bf75"/><stop offset="1" stop-color="#4fb77d"/></linearGradient></defs><path d="M43 1C22-1 2 11 1 23c0 6 5 9 10 8-5-4-4-11 4-16C23 9 32 9 37 4c2-1 4-2 6-3z" fill="url(#wb)"/><path d="M10 30c6 2 14-1 14-7 0-4-6-4-9-1 3-1 6 0 5 3s-7 5-10 5z" fill="#5a92cf"/><path d="M17 17c8-4 24-3 24 7C40 33 22 43 4 39c13 0 26-6 27-15 0-5-7-8-14-7z" fill="url(#wg)"/></svg>
    <div><strong>极光下载站</strong><span>www.xz7.com</span></div>
  </div>
</div>
</body>
</html>
```
FILE: styles.css
```css
* { box-sizing: border-box; }
body { margin: 0; padding-left: 2px; background: #bdbdbd; overflow: hidden; color: #444; font: 12px/15px "Noto Sans CJK SC", "Noto Sans", sans-serif; }
button, input, select { font: inherit; color: inherit; }
button { border: 0; background: none; padding: 0; white-space: nowrap; }
svg { display: block; flex: none; }
h1, h2 { margin: 0; font-weight: 400; }
i { font-style: normal; }
.app { position: relative; height: 100vh; overflow: hidden; display: flex; flex-direction: column; background: #e6e6e6; border-left: 1px solid #217346; }

/* title bar */
.titlebar { display: flex; flex: none; background: #217346; color: #fff; height: 60px; }
.title-left { width: 701px; display: flex; flex-direction: column; }
.doc-title { height: 34px; line-height: 34px; font-size: 12px; text-align: center; }
.tabs { display: flex; gap: 1px; height: 26px; }
.tab { padding: 0 14px 3px; }
.tab-file { width: 61px; }
.tab-active { background: #f1f1f1; color: #217346; }
.context-tabs { width: 104px; background: #1e5c38; text-align: center; }
.context-title { display: block; height: 34px; line-height: 34px; color: #a5ccb3; }
.context-tabs .tab { flex: 1; }
.title-right { flex: 1; display: flex; flex-direction: column; }
.window-controls { display: flex; justify-content: flex-end; height: 34px; padding: 0 9px 2px 0; gap: 33px; }
.title-actions { display: flex; align-items: center; height: 26px; padding-left: 16px; }
.tell-me { flex: 1; padding-left: 6px; color: #a5ccb3; line-height: 24px; }
.login { padding: 0 10px 3px; }
.share { display: flex; align-items: center; gap: 3px; width: 62px; height: 26px; padding: 0 0 2px 7px; background: #0f5c2e; }

/* small shared glyphs */
.caret { display: inline-block; flex: none; width: 0; height: 0; border: 3px solid transparent; border-top-color: #666; border-bottom: 0; vertical-align: middle; }
.off .caret { border-top-color: #bbb; }
.off .caret.dark { border-top-color: #666; }
.caret.large { border-width: 4px 4px 0; }
.caret.wide-caret { border-width: 5px 5px 0; }
.tri-up { width: 0; height: 0; border: 4px solid transparent; border-bottom-color: #666; border-top: 0; }
.tri-right { width: 0; height: 0; border: 4px solid transparent; border-left-color: #666; border-right: 0; }

/* ribbon */
.ribbon { position: relative; display: flex; flex: none; height: 95px; padding: 4px 0; background: #f1f1f1; border-bottom: 1px solid #d5d5d5; }
.group { display: flex; flex-direction: column; flex: none; border-right: 1px solid #d2d2d2; }
.group-body { flex: 1; display: flex; }
.group-label { position: relative; height: 13px; line-height: 12px; text-align: center; color: #666; white-space: nowrap; }
.has-launcher { padding-right: 17px; }
.launcher { position: absolute; right: 4px; bottom: 0; }
.off { color: #a0a0a0; }
.g-send, .g-invoice { width: 55px; }
.g-clip { width: 117px; }
.g-font { width: 250px; }
.g-align { width: 239px; }
.g-num { width: 140px; }
.g-style { width: 189px; }
.g-cells { width: 135px; }
.g-edit { width: 229px; }
.big { display: flex; flex-direction: column; align-items: center; flex: 1; }
.big > span { height: 15px; }
.big > .big-icon { height: 35px; display: flex; align-items: center; }
.g-clip .paste { flex: none; width: 46px; }
.g-style .big { flex: none; width: 60px; }
.g-style .big:last-child { width: 64px; }
.g-cells .big { flex: none; width: 42px; }
.g-cells .group-body { padding-left: 4px; }
.g-clip .group-body { padding-left: 2px; }
.g-edit .sort { flex: none; width: 64px; }
.g-edit .group-body { padding-right: 4px; padding-left: 7px; }
.g-edit .stack { width: 86px; }
.stack { display: flex; flex-direction: column; }
.small { display: flex; align-items: center; gap: 3px; height: 23px; padding-bottom: 3px; }
.copy-caret { margin-left: 5px; }
.sum-caret { margin-left: 7px; }
.rows { flex-direction: column; padding-top: 7px; gap: 7px; display: flex; }
.row { display: flex; align-items: center; height: 23px; }
.g-font .row { padding-left: 4px; }
.g-font .format-row { padding-left: 3px; }
.combo { display: flex; align-items: center; height: 23px; background: #fff; border: 1px solid #c6c6c6; }
.combo select { flex: 1; min-width: 0; height: 21px; appearance: none; border: 0; background: none; padding: 0 3px 1px; outline: 0; }
.font-name { width: 158px; }
.font-size { width: 40px; margin-left: -1px; font-size: 13px; }
.num-format { width: 131px; }
.drop { display: flex; width: 13px; height: 21px; background: #e6e6e6; align-items: center; justify-content: center; }
.drop::after { content: ""; border: 3px solid transparent; border-top-color: #bbb; border-bottom: 0; }
.grow-font { display: flex; align-items: flex-start; width: 23px; padding-left: 6px; }
.ga { font: 500 15px/18px "Noto Sans CJK SC", sans-serif; }
.gs { font: 500 12px/20px "Noto Sans CJK SC", sans-serif; }
.fmt { width: 22px; display: flex; justify-content: center; font-size: 13px; }
.fmt em { font-family: "Liberation Serif", serif; font-weight: 700; font-size: 14px; }
.fmt u { font-weight: 700; }
.letter { font-size: 15px; font-weight: 500; }
.pinyin { flex-direction: column; align-items: center; width: 18px; font-size: 9px; line-height: 9px; }
.slot { margin: 0 3px; }
.sep { width: 10px; height: 22px; background: linear-gradient(#d5d5d5, #d5d5d5) center / 1px 100% no-repeat; }
.bar { width: 1px; height: 22px; background: #d5d5d5; }
.align-left { width: 128px; padding-left: 8px; background: linear-gradient(#dcdcdc, #dcdcdc) right 8px / 1px 54px no-repeat; }
.align-right { margin-left: 7px; }
.icons { gap: 8px; }
.icons .caret { margin-left: -3px; }
.wide { gap: 3px; }
.merge-caret { margin-left: 8px; }
.g-num .row { padding-left: 4px; }
.g-num .number-row { gap: 6px; padding-left: 7px; }
.percent { width: 16px; font-size: 15px; }
.comma { display: flex; justify-content: center; width: 15px; }
.decimals { display: flex; flex-direction: column; align-items: flex-end; width: 16px; font-size: 8px; line-height: 8px; }
.collapse { position: absolute; right: 3px; bottom: 5px; }

/* quick access and formula rows */
.quick-bar { display: flex; align-items: center; flex: none; height: 35px; padding: 0 0 2px 18px; }
.quick-bar .caret { margin-left: 7px; }
.redo { margin-left: 35px; }
.undo { margin-left: 22px; }
.quick-print { margin-left: 24px; }
.preview { margin-left: 38px; }
.more { margin-left: 40px; }
.formula-row { display: flex; align-items: center; flex: none; margin: 10px 0; height: 28px; padding-left: 5px; font-size: 14px; }
.name-box, .fx-box, .formula-box { display: flex; align-items: center; height: 28px; background: #fff; border: 1px solid #c6c6c6; }
.name-box { width: 124px; padding-right: 5px; }
.name-box input, .formula-box input { flex: 1; min-width: 0; border: 0; background: none; height: 26px; padding: 0 7px 2px; outline: 0; font-family: "Open Sans", "Noto Sans CJK SC", sans-serif; color: #555; }
.grip { margin: 0 13px 0 14px; }
.fx-box { width: 110px; padding: 0 12px; justify-content: space-between; }
.fx { font: italic 700 15px/18px "Liberation Serif", serif; color: #555; }
.fx small { font-size: 12px; }
.formula-box { flex: 1; margin-left: 3px; padding-right: 3px; border-right: 0; }
.formula-box input { padding-left: 11px; }

/* sheet */
.workspace { flex: 1; min-height: 0; display: flex; }
.sheet { position: relative; flex: 1; min-width: 0; overflow: hidden; border-right: 1px solid #a0a0a0; }
.cells { width: 100%; table-layout: fixed; border-spacing: 0; background: #fff; color: #000; }
.c-head { width: 29px; } .c-a { width: 89px; } .c-b { width: 157px; } .c-c { width: 103px; } .c-d { width: 81px; }
.c-e { width: 175px; } .c-f { width: 130px; } .c-g { width: 127px; } .c-h { width: 210px; } .c-i { width: 152px; }
.cells th { padding: 0; font-weight: 400; font-size: 14px; line-height: 15px; background: #e6e6e6; color: #222; }
.cells thead th { height: 19px; border-bottom: 1px solid #9b9b9b; border-right: 1px solid #b8b8b8; padding-top: 2px; }
.cells thead th:last-child { border-right: 0; }
.corner svg { margin-left: 14px; }
.cells tbody th { border-right: 1px solid #9b9b9b; border-bottom: 1px solid #c0c0c0; vertical-align: bottom; }
.cells td { padding: 0 0 2px; text-align: center; border-right: 1px solid #d4d4d4; border-bottom: 1px solid #d4d4d4; line-height: 24px; white-space: nowrap; }
.cells td.k { border-color: #000; }
.cells td:last-child { border-right: 0; }
.cells .before-hidden { border-bottom: 0; box-shadow: inset 0 -2px #e6e6e6, inset 0 -3px #aaa; }
.cells .after-hidden { box-shadow: inset 0 1px #e6e6e6, inset 0 2px #aaa; }
.h30 { height: 30px; } .h38 { height: 38px; } .h40 { height: 40px; } .h44 { height: 44px; } .h47 { height: 47px; } .h53 { height: 53px; }
.cells .heading { font-size: 21px; font-weight: 700; padding-bottom: 6px; }
.labels td { font-size: 15px; font-weight: 700; }
.name { font-size: 13px; background: #f0ebf7; }
.red { background: #f9e9e9; }
.blue { background: #e8eff9; }
.num { font-size: 24px; font-weight: 300; }
.cells .date { font-size: 20px; font-weight: 300; text-align: left; padding-left: 3px; }
.drawing-layer { position: absolute; top: 19px; left: 0; right: 0; bottom: 0; overflow: hidden; }
.ranges { position: absolute; left: 29px; top: 0; }
.chart { position: absolute; left: 623px; top: 0; }
.chart-title { font-size: 18px; fill: #595959; }
.axis, .category { font-size: 11px; fill: #595959; }
.category { font-size: 12px; }
.chart-buttons { position: absolute; left: 1113px; top: 0; display: flex; flex-direction: column; gap: 10px; }
.chart-buttons button { display: flex; align-items: center; justify-content: center; width: 28px; height: 28px; background: #fff; border: 1px solid #a8a8a8; }
.scrollbar { width: 21px; flex: none; padding: 2px 3px 0; display: flex; flex-direction: column; }
.scrollbar button { display: flex; align-items: center; justify-content: center; height: 15px; background: #fff; border: 1px solid #ababab; }
.track { flex: 1; background: #dadada; }
.thumb { height: 58%; background: #fff; border: 1px solid #ababab; }

/* format pane */
.pane { width: 278px; flex: none; margin-top: 2px; padding: 8px 7px 0 13px; border-left: 1px solid #bfbfbf; }
.pane-head { display: flex; align-items: center; height: 30px; color: #217346; }
.pane-head h2 { flex: 1; font-size: 21px; line-height: 30px; font-weight: 300; }
.pane-head button { margin-left: 7px; }
.pane-sub { display: flex; align-items: center; gap: 7px; height: 18px; padding-left: 4px; color: #217346; font-weight: 700; }
.pane-icons { display: flex; align-items: center; gap: 17px; height: 25px; margin-top: 13px; padding-left: 5px; }
.pane-divider { display: flex; align-items: flex-end; height: 19px; }
.pane-divider i { width: 91px; height: 1px; background: #c3c3c3; }
.pane-divider .rest { width: auto; flex: 1; }
.pane-section { display: flex; align-items: center; gap: 8px; height: 15px; margin-top: 6px; padding-left: 7px; color: #217346; font-weight: 700; }
.plot-on { border: 0; margin: 7px 0 0; padding: 0 0 0 22px; }
.plot-on legend { padding: 0; line-height: 15px; margin-bottom: 12px; }
.plot-on label { display: flex; align-items: center; height: 25px; padding-left: 10px; gap: 6px; }
.plot-on label span { padding-bottom: 2px; }
.plot-on input { appearance: none; margin: 0; width: 12px; height: 12px; border: 1px solid #ababab; border-radius: 50%; background: #fff; }
.plot-on input:checked { background: radial-gradient(#666 0 3px, #fff 4px); }
.field { display: flex; align-items: center; height: 26px; margin: 4px 0 6px; padding: 0 20px 0 22px; }
.field label { flex: none; width: 78px; padding-bottom: 2px; white-space: nowrap; }
.slider { appearance: none; flex: none; width: 28px; height: 10px; margin: 0; background: linear-gradient(#aaa, #aaa) center / 100% 1px no-repeat; }
.slider::-webkit-slider-thumb { appearance: none; width: 2px; height: 9px; background: #666; }
.filled { background: linear-gradient(#666, #666) left center / 9px 2px no-repeat, linear-gradient(#aaa, #aaa) center / 100% 1px no-repeat; }
.spin { flex: 1; min-width: 0; display: flex; align-items: center; margin-left: 6px; height: 26px; background: #fff; border: 1px solid #ababab; padding-right: 4px; }
.spin input { flex: 1; min-width: 0; border: 0; background: none; padding: 0 7px 3px; font-size: 13px; outline: 0; }
.spin span { display: flex; flex-direction: column; gap: 7px; }

/* floating panels */
.mini-toolbar { position: absolute; left: 1036px; top: 348px; width: 189px; height: 71px; display: flex; align-items: flex-start; padding: 6px 3px 0 10px; background: #fff; border: 1px solid #c6c6c6; box-shadow: 1px 2px 3px rgba(0, 0, 0, .2); }
.mini-btn { display: flex; flex-direction: column; align-items: center; gap: 7px; color: #666; }
.mini-toolbar > .caret { margin: 11px 8px 0 1px; }
.mini-toolbar > .combo { flex: 1; height: 24px; margin-top: 16px; margin-left: -7px; padding-right: 4px; }
.context-menu { position: absolute; left: 1036px; top: 434px; width: 178px; padding: 1px; background: #fff; border: 1px solid #c6c6c6; box-shadow: 2px 2px 3px rgba(0, 0, 0, .2); color: #555; }
.context-menu button { display: flex; align-items: center; width: 100%; height: 25px; padding-bottom: 1px; }
.context-menu hr { height: 1px; margin: 0 0 1px 32px; border: 0; background: #d9d9d9; }
.mi { width: 31px; padding-left: 4px; }
.context-menu .disabled { color: #b5b5b5; }
.context-menu .selected { background: #c5c5c5; color: #222; }
.submenu { display: flex; align-items: center; margin-left: auto; padding: 0 9px 0 8px; height: 13px; border-left: 1px solid #d9d9d9; }
.pointers { position: absolute; left: 897px; top: 430px; pointer-events: none; }
.arrows { filter: drop-shadow(2px 2px 2px rgba(0, 0, 0, .5)); }
.watermark { position: absolute; right: 9px; bottom: 8px; display: flex; gap: 1px; color: #5f98cc; }
.watermark div { display: flex; flex-direction: column; }
.watermark strong { font-size: 21px; line-height: 23px; }
.watermark span { font: 700 16px/22px "Liberation Sans", sans-serif; color: #68bd85; }
```
